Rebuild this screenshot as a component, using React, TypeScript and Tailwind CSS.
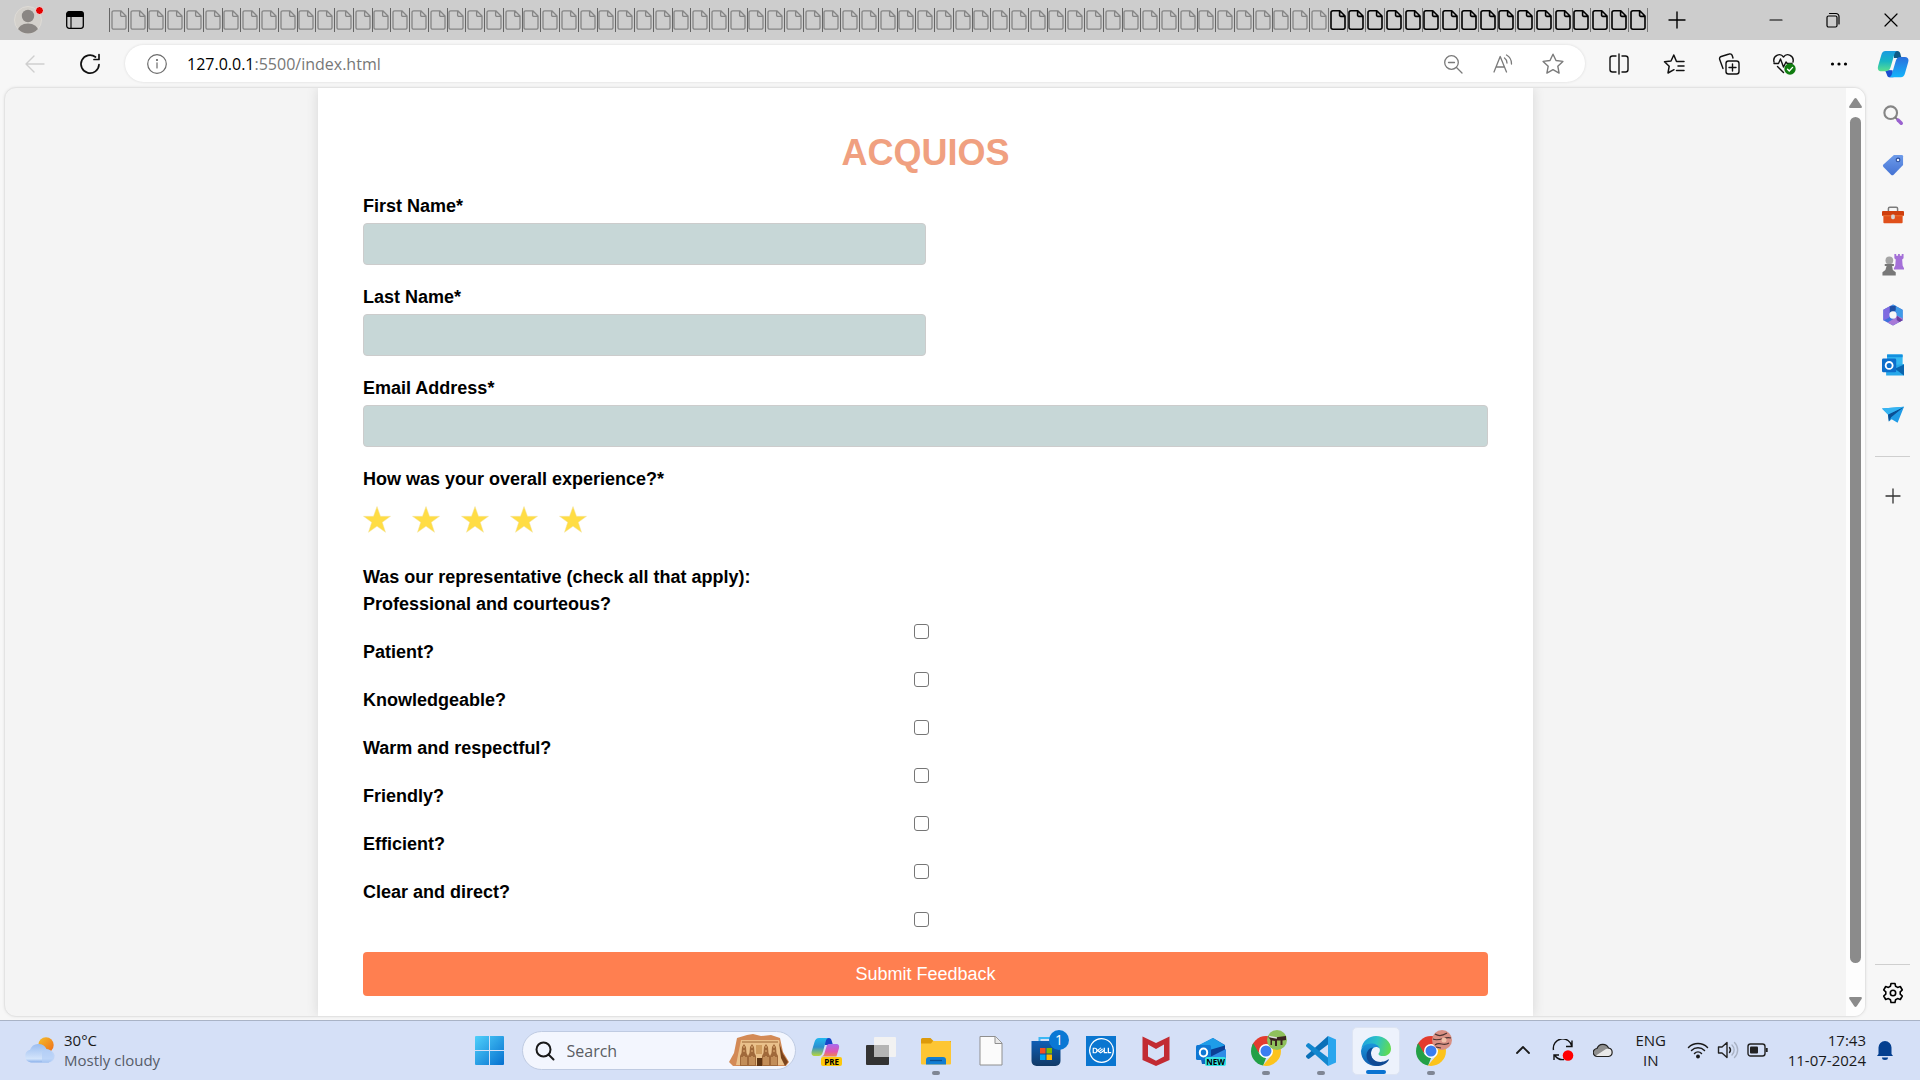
import React from "react";
import { SiDell } from "react-icons/si";

const UI = "font-['Open_Sans','Noto_Sans',sans-serif]";

/* ---------- small helpers ---------- */

function Stroke({ size = 24, box = 24, w = 1.5, children }: { size?: number; box?: number; w?: number; children: React.ReactNode }) {
  return (
    <svg width={size} height={size} viewBox={`0 0 ${box} ${box}`} fill="none" stroke="currentColor" strokeWidth={w} strokeLinecap="round" strokeLinejoin="round" aria-hidden="true">
      {children}
    </svg>
  );
}

function Art({ size = 30, box = 30, children }: { size?: number; box?: number; children: React.ReactNode }) {
  return (
    <svg width={size} height={size} viewBox={`0 0 ${box} ${box}`} aria-hidden="true">
      {children}
    </svg>
  );
}

const STAR = "M12 2.2l3 6.3 6.9.9-5.1 4.8 1.3 6.9-6.1-3.4-6.1 3.4 1.3-6.9L2.1 9.4l6.9-.9z";

/* ---------- browser tab strip ---------- */

const TABS = Array.from({ length: 82 }, (_, i) => i >= 65);

function TabStrip() {
  return (
    <header className="flex h-10 shrink-0 items-center bg-[#cdcdcd] text-black">
      <button aria-label="Profile" className="relative ml-[14px] size-7 shrink-0">
        <Art size={28} box={28}>
          <clipPath id="avatar"><circle cx="14" cy="14" r="13.5" /></clipPath>
          <circle cx="14" cy="14" r="13.5" fill="#d3d0cb" stroke="#dedbd6" />
          <g clipPath="url(#avatar)" fill="#8a8683">
            <circle cx="14" cy="10" r="6.2" />
            <ellipse cx="14" cy="25.5" rx="10.5" ry="8" />
          </g>
        </Art>
        <span className="absolute top-0 -right-0.5 size-[9px] rounded-full border border-[#e8e8e8] bg-[#e60000]" />
      </button>
      <button aria-label="Tab actions" className="ml-6 shrink-0">
        <svg width="18" height="18" viewBox="0 0 18 18" aria-hidden="true">
          <rect x=".7" y=".7" width="16.6" height="16.6" rx="2.5" fill="none" stroke="#000" strokeWidth="1.3" />
          <path d="M1 5.5V3a2.3 2.3 0 0 1 2.3-2.3h11.4A2.3 2.3 0 0 1 17 3v2.5zM5 5v12" stroke="#000" strokeWidth="1.1" />
        </svg>
      </button>
      <div className="ml-[25px] flex h-6 min-w-0 flex-1 border-r border-[#777]">
        {TABS.map((awake, i) => (
          <button key={i} aria-label={`Tab ${i + 1}`} className={awake ? "flex min-w-0 flex-1 items-center justify-center border-l border-[#777] text-black" : "flex min-w-0 flex-1 items-center justify-center border-l border-[#666] text-[#858585]"}>
            <svg width="16" height="20" viewBox="0 0 16 20" fill="none" stroke="currentColor" strokeWidth={awake ? 1.6 : 1.3} strokeLinejoin="round" aria-hidden="true" className="shrink-0">
              <path d="M2.8.8h7L15 6v11.4a1.8 1.8 0 0 1-1.8 1.8H2.8A1.8 1.8 0 0 1 1 17.4V2.6A1.8 1.8 0 0 1 2.8.8zM9.6.9v4.3A1.2 1.2 0 0 0 10.8 6.400H15" />
            </svg>
          </button>
        ))}
      </div>
      <div className="flex h-full w-[272px] shrink-0 items-center">
        <button aria-label="New tab" className="flex w-[58px] justify-center">
          <Stroke size={18} box={18} w={1.4}><path d="M9 1v16M1 9h16" /></Stroke>
        </button>
        <span className="w-[41px]" />
        <button aria-label="Minimize" className="flex w-[57px] justify-center">
          <Stroke size={14} box={14} w={1.2}><path d="M1 7h12" /></Stroke>
        </button>
        <button aria-label="Restore" className="flex w-[57px] justify-center">
          <Stroke size={16} box={16} w={1.2}><rect x="2" y="4" width="10" height="11" rx="1.5" /><path d="M4.5 1.5h6.5a3 3 0 0 1 3 3v7.5" /></Stroke>
        </button>
        <button aria-label="Close" className="flex w-[59px] justify-center">
          <Stroke size={14} box={14} w={1.2}><path d="M1 1l12 12M13 1L1 13" /></Stroke>
        </button>
      </div>
    </header>
  );
}

/* ---------- address bar row ---------- */

function CopilotMark() {
  return (
    <Art size={32} box={32}>
      <defs>
        <linearGradient id="cpA" x1="0" y1="0" x2="0" y2="1"><stop stopColor="#1a9be0" /><stop offset=".5" stopColor="#18b5c4" /><stop offset="1" stopColor="#5be08f" /></linearGradient>
        <linearGradient id="cpB" x1="0" y1="0" x2="0" y2="1"><stop stopColor="#2a6fdc" /><stop offset="1" stopColor="#14b4fb" /></linearGradient>
      </defs>
      <path d="M17 3h3.500c1.500 0 2.300 1 2.800 2.600L24.500 10h-7.500z" fill="#0e5a86" />
      <path d="M8 22l2.500 6.200c.5.800 1.200 1.100 2.200 1.100h3.800l-1-7z" fill="#1a4fd0" />
      <path d="M8.500 3h12.200c-2 .2-2.800 1.600-3.400 3.600l-3.500 12c-.8 2.800-2 4.700-5 4.700H4.500C1.200 23.300.2 21 1.200 17.700L4.300 7C5 4.300 6.300 3 8.500 3z" fill="url(#cpA)" />
      <path d="M23.800 29.300H11.600c2-.2 2.800-1.600 3.400-3.600l3.500-12c.8-2.800 2-4.700 5-4.700h4.300c3.300 0 4.300 2.300 3.300 5.600L28 25.300c-.7 2.700-2 4-4.200 4z" fill="url(#cpB)" />
    </Art>
  );
}

function Toolbar() {
  const slot = "flex w-[55px] shrink-0 justify-center";
  return (
    <nav className="flex h-[47px] shrink-0 items-center bg-[#f7f7f7] pr-px text-[#111]">
      <button aria-label="Back" className="ml-[7px] flex w-[55px] justify-center text-[#cfcfcf]">
        <Stroke size={20} box={20} w={1.4}><path d="M19 10H1M9 2L1 10l8 8" /></Stroke>
      </button>
      <button aria-label="Refresh" className={slot}>
        <Stroke size={22} box={22} w={1.7}><path d="M20 11.5a9 9 0 1 1-3.5-7.5M20 1.5V6.500H15" /></Stroke>
      </button>
      <div className="ml-2 mr-[6px] flex h-[37px] min-w-0 flex-1 items-center rounded-full bg-white pl-[22px] pr-[7px] shadow-[0_0_3px_rgba(0,0,0,0.12)]">
        <button aria-label="View site information" className="text-[#6b6b6b]">
          <Stroke size={20} box={20} w={1.2}><circle cx="10" cy="10" r="9.3" /><path d="M10 8.800v5.200" /><circle cx="10" cy="6" r=".5" fill="currentColor" /></Stroke>
        </button>
        <div className={`ml-5 flex-1 text-[16px] leading-6 text-[#777] ${UI}`}>
          <span className="text-black">127.0.0.1</span>:5500/index.html
        </div>
        <div className="flex text-[#7a7a7a]">
          <button aria-label="Zoom out" className="flex w-[50px] items-center justify-center">
            <Stroke size={20} box={20} w={1.3}><circle cx="8.5" cy="8.5" r="6.8" /><path d="M13.5 13.5L19 19M5.5 8.500h6" /></Stroke>
          </button>
          <button aria-label="Read aloud" className="flex w-[50px] items-center justify-center">
            <Stroke size={20} box={20} w={1.3}><path d="M1 18L7.200 2.500 13.500 18M3.200 13h8M11.500 4a6 6 0 0 1 2.500 5M13.500 1a10 10 0 0 1 5 9" /></Stroke>
          </button>
          <button aria-label="Add to favorites" className="flex w-[50px] items-center justify-center">
            <Stroke size={24} w={1.4}><path d={STAR} /></Stroke>
          </button>
        </div>
      </div>
      <button aria-label="Split screen" className={slot}>
        <Stroke size={22} box={22} w={1.4}><path d="M8 3H4.500A2.500 2.500 0 0 0 2 5.500v11A2.500 2.500 0 0 0 4.500 19H8M14 3h3.500A2.500 2.500 0 0 1 20 5.500v11a2.500 2.500 0 0 1-2.500 2.500H14M11 1v20" /></Stroke>
      </button>
      <button aria-label="Favorites" className={slot}>
        <Stroke size={22} box={22} w={1.5}><path d="M21 8.500h-7.500L10.800 2 8 8l-6.500.8 4.700 4.400L5 20l6-3.300M15 13h6M13.500 17.500H21" /></Stroke>
      </button>
      <button aria-label="Collections" className={slot}>
        <Stroke size={22} box={22} w={1.4}><rect x="8" y="8" width="13" height="13" rx="2.5" /><path d="M14.500 11v7M11 14.500h7M5 15.500l-3.300-9A2.300 2.300 0 0 1 3.200 3.500l8-2.500a2.300 2.300 0 0 1 3 1.500L15 5" /></Stroke>
      </button>
      <button aria-label="Browser essentials" className={slot}>
        <svg width="24" height="24" viewBox="0 0 24 24" fill="none" stroke="#111" strokeWidth="1.4" strokeLinejoin="round" strokeLinecap="round" aria-hidden="true">
          <path d="M2 10C.5 4 8 0 11.500 5 15 0 22.500 4 21 10M5.500 14.500l6 6M2 11.500h4.500l2-4.500 3 8 2.500-5 1.300 1.500H20" />
          <circle cx="18" cy="17" r="5.7" fill="#107c10" stroke="none" />
          <path d="M15.500 17.200l1.800 1.800 3.300-3.600" stroke="#fff" />
        </svg>
      </button>
      <button aria-label="Settings and more" className={slot}>
        <Art size={20} box={20}><circle cx="3.5" cy="10" r="1.6" /><circle cx="10" cy="10" r="1.6" /><circle cx="16.5" cy="10" r="1.6" /></Art>
      </button>
      <button aria-label="Copilot" className="flex w-[53px] shrink-0 justify-center">
        <CopilotMark />
      </button>
    </nav>
  );
}

/* ---------- feedback form ---------- */

const TRAITS = ["Professional and courteous?", "Patient?", "Knowledgeable?", "Warm and respectful?", "Friendly?", "Efficient?", "Clear and direct?"];

function Field({ id, label, wide }: { id: string; label: string; wide?: boolean }) {
  return (
    <div className="mb-[22px]">
      <label htmlFor={id} className="mb-[6px] block text-[18px] font-bold leading-[21px]">{label}</label>
      <input id={id} className={wide ? "block h-[42px] w-full rounded-[4px] border border-[#ccc] bg-[#c7d7d7] px-3" : "block h-[42px] w-1/2 rounded-[4px] border border-[#ccc] bg-[#c7d7d7] px-3"} />
    </div>
  );
}

function FeedbackForm() {
  return (
    <form className="mx-auto w-full max-w-[1215px] self-stretch bg-white px-[45px] pt-11 font-['Liberation_Sans',Arial,sans-serif] text-black shadow-[0_0_12px_rgba(0,0,0,0.12)]" onSubmit={(e) => e.preventDefault()}>
      <h1 className="mb-[22px] text-center text-[36px] font-bold leading-[42px] text-[#f0a080]">ACQUIOS</h1>
      <Field id="first" label="First Name*" />
      <Field id="last" label="Last Name*" />
      <Field id="email" label="Email Address*" wide />
      <h2 className="text-[18px] font-bold leading-[21px]">How was your overall experience?*</h2>
      <div className="mt-4 mb-[34px] flex gap-[21px]">
        {[1, 2, 3, 4, 5].map((n) => (
          <button key={n} type="button" aria-label={`${n} star`}>
            <svg width="28" height="27" viewBox="0 0 28 27" aria-hidden="true">
              <path d="M14 .5l3.500 9.800H27.500L19.300 16.300l3.200 10L14 20.200 5.500 26.300l3.200-10L.5 10.300H10.500z" fill="#ffdd44" stroke="#f3e3a0" strokeWidth=".5" />
            </svg>
          </button>
        ))}
      </div>
      <h2 className="mb-[6px] text-[18px] font-bold leading-[21px]">Was our representative (check all that apply):</h2>
      <div className="mb-[22px]">
        {TRAITS.map((t, i) => (
          <div key={t} className="h-12">
            <label htmlFor={`trait-${i}`} className="block text-[18px] font-bold leading-[21px]">{t}</label>
            <div className="flex justify-center pt-[9px] pr-2">
              <input id={`trait-${i}`} type="checkbox" className="size-[15px] appearance-none rounded-[3px] border border-[#767676] bg-white checked:bg-[#0075ff]" />
            </div>
          </div>
        ))}
      </div>
      <button type="submit" className="block h-11 w-full rounded-[4px] bg-[#ff7f50] text-[18px] leading-[21px] text-white">Submit Feedback</button>
    </form>
  );
}

function Viewport() {
  return (
    <main className="flex min-w-0 flex-1 overflow-hidden rounded-[12px] border border-[#e3e3e3] bg-[#f4f4f4] shadow-[0_0_3px_rgba(0,0,0,0.08)]">
      <div className="flex min-w-0 flex-1 overflow-hidden">
        <FeedbackForm />
      </div>
      <div className="flex w-[19px] shrink-0 flex-col items-center bg-[#fdfdfd] pt-[10px] pb-[9px]">
        <svg width="13" height="10" viewBox="0 0 13 10" aria-hidden="true"><path d="M5.300.8a1.500 1.500 0 0 1 2.400 0l5 7.500c.4.800 0 1.700-1 1.700H1.300c-1 0-1.400-.9-1-1.700z" fill="#8b8b8b" /></svg>
        <div className="mt-[9px] mb-[34px] w-[11px] flex-1 rounded-full bg-[#8b8b8b]" />
        <svg width="13" height="10" viewBox="0 0 13 10" aria-hidden="true"><path d="M5.300 9.200a1.500 1.500 0 0 0 2.400 0l5-7.500c.4-.8 0-1.700-1-1.700H1.300C.3 0-.1.900.3 1.700z" fill="#8b8b8b" /></svg>
      </div>
    </main>
  );
}

/* ---------- sidebar ---------- */

const SIDE: { name: string; art: React.ReactNode }[] = [
  { name: "Search", art: <><circle cx="9.5" cy="9.5" r="6.9" fill="none" stroke="#858585" strokeWidth="2.3" /><path d="M14.500 14.500l2.500 2.500" stroke="#777" strokeWidth="2" /><path d="M17.500 17.500l3.500 3.500" stroke="#9a62cf" strokeWidth="3.8" strokeLinecap="round" /></> },
  { name: "Shopping", art: <><path d="M13 1h8.500A1.500 1.500 0 0 1 23 2.500v9.500L12.700 22.600a2 2 0 0 1-2.800 0L1.600 14.300a2 2 0 0 1 0-2.800z" fill="url(#tagG)" /><circle cx="17.5" cy="6.5" r="2" fill="#e8f0ff" stroke="#2c4f9e" strokeWidth="1.2" /></> },
  { name: "Tools", art: <><path d="M7 8V5A1.500 1.500 0 0 1 8.500 3.500h7A1.500 1.500 0 0 1 17 5v3" fill="none" stroke="#7b7b7b" strokeWidth="1.6" /><rect x="1.500" y="11" width="21" height="10" rx="1" fill="#e0501b" /><rect x="0" y="7.500" width="24" height="5.500" rx="1" fill="#cf3f0e" /><path d="M1 12.800h22" stroke="#f07638" /><rect x="10" y="11.500" width="4" height="5" rx="1.500" fill="#d5d5d5" /></> },
  { name: "Games", art: <><path d="M13.500 0h2v2h2V0h2v2h2V0h2v4.500L22 6l.5 6.500 1.500 3v1.500H13V15.500l1.500-3L15 6l-1.500-1.500z" fill="#a470d8" /><circle cx="8" cy="7" r="4.200" fill="#a5a5a5" /><path d="M3 11h10v2h-2l.8 4.500 3.200 2.500v3.500H.5V20l3.200-2.500L5 13H3z" fill="#787878" /></> },
  { name: "Microsoft 365", art: <><path d="M12 .5l10.500 5.700v11.600L12 23.500 1.500 17.800V6.200z" fill="#3f6fdc" /><path d="M12 .5L22.500 6.500v10.500l-6.500-4V9.300L9 5z" fill="#3f9be8" /><path d="M6 20.200l6 3.300 10.500-5.700V15.500L16 12.500l-4 4z" fill="#a779d8" /><path d="M22.500 17.800L16 12.500v5l3 2.200z" fill="#6b3f9e" /><path d="M1.500 6.200L10 1.500 9 10l-1.500 5L1.500 18z" fill="#7f6ae0" /><path d="M8.500 2.500L15 2v5L8.500 10z" fill="#1f4fa5" /><circle cx="12" cy="12" r="4" fill="#f7f7f7" /></> },
  { name: "Outlook", art: <><rect x="5.500" y="0.500" width="17" height="20" rx="1" fill="#35b8f1" /><path d="M5.500.5h17v3h-17z" fill="#1490df" /><path d="M4.500 13l19.500-2v12.500H4.500z" fill="#28a8ea" /><path d="M24 11.500v12L14 16z" fill="#0a64ad" /><rect x="0" y="5" width="15.500" height="15" rx="1.500" fill="#0d6ecb" /><circle cx="7.800" cy="12.500" r="3.800" fill="none" stroke="#fff" strokeWidth="2" /></> },
  { name: "Drop", art: <><path d="M0 5l24-2-7 17.500-6.500-4L7.500 19 6.500 11.500z" fill="#1f9be6" /><path d="M6.500 11.500L24 3 10 14.500 7.500 19z" fill="#0b4f94" /><path d="M0 5l24-2L6.500 11.500z" fill="#35b4f2" /></> },
];

function Sidebar() {
  return (
    <aside className="flex w-[54px] shrink-0 flex-col items-center pt-[3px] pr-px">
      <svg width="0" height="0" className="absolute" aria-hidden="true"><defs><linearGradient id="tagG" x1="0" y1="0" x2="0" y2="1"><stop stopColor="#6d9bea" /><stop offset="1" stopColor="#4472d3" /></linearGradient></defs></svg>
      {SIDE.map((s) => (
        <button key={s.name} aria-label={s.name} className="flex h-[50px] w-full items-center justify-center">
          <svg width="22" height="22" viewBox="0 0 24 24" aria-hidden="true">{s.art}</svg>
        </button>
      ))}
      <hr className="mt-4 w-[35px] border-[#cfcfcf]" />
      <button aria-label="Customize" className="mt-[31px] text-[#333]"><Stroke size={16} box={16} w={1.3}><path d="M8 1v14M1 8h14" /></Stroke></button>
      <hr className="mt-auto w-[35px] border-[#cfcfcf]" />
      <button aria-label="Settings" className="mt-4 mb-3 text-black">
        <Stroke size={24} w={1.6}>
          <path d="M10 2.500h4l.6 2.800 2 1.100 2.700-.9 2 3.500-2.100 1.900v2.200l2.100 1.900-2 3.500-2.700-.9-2 1.100-.6 2.800h-4l-.6-2.800-2-1.100-2.700.9-2-3.500 2.100-1.900v-2.200L2.700 9l2-3.500 2.700.9 2-1.100z" />
          <circle cx="12" cy="12" r="2.7" />
        </Stroke>
      </button>
    </aside>
  );
}

/* ---------- taskbar ---------- */

function Chrome({ id, badge }: { id: string; badge: "green" | "pink" }) {
  return (
    <>
      <Art>
        <clipPath id={id}><circle cx="15" cy="15" r="15" /></clipPath>
        <g clipPath={`url(#${id})`}>
          <path d="M0 0h30v8.500H15L8.500 17.500 0 8z" fill="#e33b2e" />
          <path d="M0 3.500L8.800 18.500 15 22l-3 8H0z" fill="#23a047" />
          <path d="M15 8.200h15V30H11.500l9.700-11.500z" fill="#fcc31c" />
        </g>
        <circle cx="15" cy="15" r="7" fill="#fff" />
        <circle cx="15" cy="15" r="5.5" fill="#3b7df0" />
      </Art>
      <span className="absolute -top-1.5 -right-1.5">
        <svg width="20" height="20" viewBox="0 0 20 20" aria-hidden="true">
          {badge === "green" ? (
            <><circle cx="10" cy="10" r="10" fill="#8fc15c" /><path d="M1 6.500l6 1 12-1.500v4l-3.500.5V15h-2v-4.500h-3.500V16H8v-5l-3-.5V15H3.500v-5z" fill="#3a2421" /><path d="M2 6.500l8 1.500" stroke="#ddd" strokeWidth="1.500" /></>
          ) : (
            <><circle cx="10" cy="10" r="10" fill="#d99084" /><path d="M3 4c5 3 8 1 12-1M1 9c6 3 12-3 18-1M3 15c5-4 8 2 14-2M4 17l5 1" fill="none" stroke="#4b3432" strokeWidth="1.2" /><circle cx="12" cy="10" r="2.5" fill="#f0c0a8" /></>
          )}
        </svg>
      </span>
    </>
  );
}

const APPS: { name: string; run?: "idle" | "active"; art: React.ReactNode }[] = [
  { name: "Copilot preview", art: (
    <>
      <Art>
        <defs>
          <linearGradient id="preA" x1="0" y1="0" x2="0" y2="1"><stop stopColor="#22b8ee" /><stop offset=".5" stopColor="#2b8fd0" /><stop offset="1" stopColor="#b8d63c" /></linearGradient>
          <linearGradient id="preB" x1="0" y1="0" x2="0" y2="1"><stop stopColor="#a66bf0" /><stop offset=".6" stopColor="#e055b0" /><stop offset="1" stopColor="#f0894a" /></linearGradient>
        </defs>
        <path d="M14 2h4c1.500 0 2.200 1 2.600 2.500L22 9h-8z" fill="#1746c8" />
        <path d="M8 2h10c-2 0-2.800 1.500-3.300 3.500L12 15.500c-.8 3-2 4.500-4.500 4.500H4c-3 0-4-2-3.200-5L3.500 6C4.300 3.300 5.600 2 8 2z" fill="url(#preA)" />
        <path d="M18 8h7c3 0 3.600 2 2.900 4.500l-2.500 8H10c2 0 3-1.500 3.500-3.500l2-6.500C16 9 16.500 8 18 8z" fill="url(#preB)" />
      </Art>
      <span className={`absolute -right-px bottom-0 rounded-[2px] bg-[#fdc80a] px-[3px] text-[8px] font-bold leading-[9px] text-black ${UI}`}>PRE</span>
    </>
  ) },
  { name: "Task view", art: (
    <Art><rect x="0" y="9" width="23" height="20" rx="1" fill="#333" /><rect x="8" y="1" width="22" height="20" rx="1" fill="#f2f2f2" /><rect x="8" y="9" width="15" height="12" fill="#b4b4b4" /></Art>
  ) },
  { name: "File Explorer", run: "idle", art: (
    <Art><path d="M0 3.500A1.500 1.500 0 0 1 1.500 2h8l3 3H30v4H0z" fill="#dd9a0b" /><path d="M0 7.500h10l2-2.500h16.500A1.500 1.500 0 0 1 30 6.500v21a1 1 0 0 1-1 1H1a1 1 0 0 1-1-1z" fill="#fdc634" /><path d="M5 28.500V24a3 3 0 0 1 3-3h14a3 3 0 0 1 3 3v4.500z" fill="#127ed2" /><path d="M9 24.500h12" stroke="#0a4f91" strokeWidth="1.3" /></Art>
  ) },
  { name: "Document", art: (
    <Art><path d="M4 .5h15.500L26 7v22H4z" fill="#fbfbfb" stroke="#8f8f8f" /><path d="M19 .5V7.500h7" fill="#e9e9e9" stroke="#8f8f8f" /></Art>
  ) },
  { name: "Microsoft Store", art: (
    <>
      <Art><defs><linearGradient id="storeG" x1="0" y1="0" x2="0" y2="1"><stop stopColor="#0e5eb5" /><stop offset="1" stopColor="#123a66" /></linearGradient></defs><path d="M8.500 7V2h12v5" fill="none" stroke="#3cb7f3" strokeWidth="2" /><path d="M.5 5h29v20a5 5 0 0 1-5 5h-19a5 5 0 0 1-5-5z" fill="url(#storeG)" /><path d="M9 12h5.500v5.500H9z" fill="#f25022" /><path d="M15.500 12H21v5.500h-5.500z" fill="#7fba00" /><path d="M9 18.500h5.500V24H9z" fill="#00a4ef" /><path d="M15.500 18.500H21V24h-5.500z" fill="#ffb900" /></Art>
      <span className={`absolute -top-1.5 -right-2 flex size-5 items-center justify-center rounded-full bg-[#0a78d4] text-[14px] leading-5 text-white ${UI}`}>1</span>
    </>
  ) },
  { name: "Dell", art: <span className="flex size-[30px] items-center justify-center bg-[#0a76d0] text-white"><SiDell size={25} /></span> },
  { name: "McAfee", art: (
    <Art><path d="M1.500.5L15 7 28.500.5V24L15 30 1.500 24zM7 8.500v12l8 4.200 8-4.200v-12L15 13z" fill="#c22b32" fillRule="evenodd" /></Art>
  ) },
  { name: "Outlook new", art: (
    <>
      <Art><path d="M2 10L17 2l12 7v19H6z" fill="#1167c0" /><path d="M2 9.500L17 2l12 7.500L14 19z" fill="#1e9de8" /><path d="M10 15L29 9.500V16L12 27z" fill="#0c3f95" /><path d="M12 22l18-9v14H12z" fill="#2f8be6" /><rect x="0" y="9" width="15" height="15" rx="1.5" fill="#0f78d4" /><ellipse cx="7.5" cy="16.5" rx="3.7" ry="4" fill="none" stroke="#fff" strokeWidth="2" /></Art>
      <span className={`absolute right-0 bottom-0 rounded-[2px] bg-[#35e3e3] px-px text-[8px] font-bold leading-[9px] text-black ${UI}`}>NEW</span>
    </>
  ) },
  { name: "Chrome", run: "idle", art: <Chrome id="chromeA" badge="green" /> },
  { name: "Visual Studio Code", run: "idle", art: (
    <Art><path d="M22 0l8 3.500v23L22 30z" fill="#2aa6ee" /><path d="M22 0v8.500L3.500 22.500a1.500 1.500 0 0 1-2 0L.3 21.300a1.200 1.200 0 0 1 0-1.800z" fill="#0a70b8" /><path d="M22 30v-8.500L3.500 7.500a1.500 1.500 0 0 0-2 0L.3 8.700a1.200 1.200 0 0 0 0 1.800z" fill="#1287cf" /></Art>
  ) },
  { name: "Edge", run: "active", art: (
    <Art>
      <defs>
        <linearGradient id="edgeA" x1="0" y1=".3" x2="1" y2=".5"><stop stopColor="#1f9fe0" /><stop offset=".5" stopColor="#2cc3c5" /><stop offset="1" stopColor="#62dc50" /></linearGradient>
        <linearGradient id="edgeB" x1="0" y1="0" x2="0" y2="1"><stop stopColor="#1b95db" /><stop offset="1" stopColor="#0f5cae" /></linearGradient>
      </defs>
      <path d="M.3 13C1.500 5 7.800 0 15 0c8.500 0 15 5.800 15 12.700 0 4.300-3.200 7.300-7.500 7.300-3.500 0-5-1.200-5-2.100 0-.7 1.400-1.300 1.400-3.900 0-3-3.200-5.500-7.400-5.500C6.500 8.500 2 10.500.3 13z" fill="url(#edgeA)" />
      <path d="M0 15C.5 10.500 5 7.500 10 7.500c4.500 0 8 2 8.700 5-1-1-2.200-1.500-3.700-1.500-3 0-5 3-5 6.500C10 25 17 27.500 22 25.500c-2 2.800-4 4.500-7 4.500C6.500 30 0 23.500 0 15z" fill="url(#edgeB)" />
      <path d="M10 17.500c0 5.500 4.500 8.500 9.500 8.500 3 0 5.500-1 7.500-2.500.7-.4 1 .2.700.7C25.500 27.800 20.500 30 16 30c-6.500-.5-10.500-5.500-10.500-10.500 0-4.300 3-7.500 6.500-8-1.300 1.500-2 3.700-2 6z" fill="#104a94" />
    </Art>
  ) },
  { name: "Chrome profile 2", run: "idle", art: <Chrome id="chromeB" badge="pink" /> },
];

function Temple() {
  return (
    <svg width="60" height="34" viewBox="0 0 60 34" aria-hidden="true">
      <path d="M0 28l5-9 3-15 10-3 6-1 8 2 10-1 9 3 3 14 6 10-3 4H4z" fill="#d38a56" />
      <path d="M12 6h38l6 25H7z" fill="#eac18b" />
      <path d="M13 8h36" stroke="#9a6435" strokeWidth="1" />
      <path d="M27 11h6v9h-6z" fill="#cf9c5f" />
      {[15, 23, 37, 45].map((x) => (
        <g key={x}>
          <path d={`M${x} 10l2 3 .5 6 1.500 3v10h-8V22l1.500-3 .5-6z`} fill="#a0693a" />
          <path d={`M${x - 1} 13h2M${x - 1} 17h2M${x - 2} 23v8M${x} 22v9M${x + 2} 23v8`} stroke="#e5b478" strokeWidth="1" />
        </g>
      ))}
      <path d="M28 24h5v8h-5z" fill="#5d3413" />
      <path d="M50 8l4 12 5 8-3 4-4-8z" fill="#7a431c" />
    </svg>
  );
}

function Taskbar() {
  return (
    <footer className={`grid h-[60px] shrink-0 grid-cols-[1fr_auto_1fr] items-center border-t border-[#a9b3c6] bg-[#d5e0f7] text-[15px] leading-5 text-[#1a1a1a] ${UI}`}>
      <button className="ml-6 flex items-center gap-[9px] justify-self-start pb-0.5 text-left">
        <svg width="31" height="26" viewBox="0 0 31 26" aria-hidden="true">
          <defs>
            <linearGradient id="sun" x1="0" y1="0" x2="1" y2="1"><stop stopColor="#f4c02c" /><stop offset="1" stopColor="#ef6a1a" /></linearGradient>
            <linearGradient id="cloud" x1="0" y1="0" x2="0" y2="1"><stop stopColor="#9bbdf0" /><stop offset=".8" stopColor="#d3e4fb" /><stop offset="1" stopColor="#86aeea" /></linearGradient>
          </defs>
          <circle cx="22" cy="8" r="7.7" fill="url(#sun)" />
          <path d="M7 25.500A6.500 6.500 0 0 1 6 12.800 9 9 0 0 1 22.500 12 7 7 0 0 1 24.500 25.500z" fill="url(#cloud)" />
          <path d="M18 15.500a7 7 0 0 1 12.500 3c0 4-2.500 7-6.500 7h-6z" fill="#b4cff6" opacity=".7" />
        </svg>
        <span>
          <span className="block">30°C</span>
          <span className="block text-[#565c68]">Mostly cloudy</span>
        </span>
      </button>

      <div className="flex items-center">
        <button aria-label="Start" className="flex w-[55px] justify-center">
          <Art size={29} box={29}>
            <defs><linearGradient id="win" gradientUnits="userSpaceOnUse" x1="0" y1="0" x2="29" y2="29"><stop stopColor="#4fd0fb" /><stop offset="1" stopColor="#0670cf" /></linearGradient></defs>
            <path d="M1 0h13v14H0V1a1 1 0 0 1 1-1zM15 0h13a1 1 0 0 1 1 1v13H15zM0 15h14v14H1a1 1 0 0 1-1-1zM15 15h14v13a1 1 0 0 1-1 1H15z" fill="url(#win)" />
          </Art>
        </button>
        <label className="mr-[3px] ml-[5px] flex h-[39px] w-[274px] items-center overflow-hidden rounded-full border border-[#bfcbe2] bg-[#f3f6fe] pl-3 pr-[6px]">
          <Stroke size={20} box={20} w={2}><circle cx="8.5" cy="8.5" r="7" /><path d="M13.500 13.500L18.500 18.500" /></Stroke>
          <input aria-label="Search" placeholder="Search" className="ml-3 w-0 flex-1 bg-transparent text-[16px] outline-none placeholder:text-[#5a5d63]" />
          <Temple />
        </label>
        {APPS.map((a) => (
          <button key={a.name} aria-label={a.name} className="flex w-[55px] justify-center">
            <span className={a.run === "active" ? "relative flex size-12 items-center justify-center rounded-[5px] border border-[#dde4f3] bg-[#edf2fc]" : "relative flex size-12 items-center justify-center"}>
              <span className="relative">{a.art}</span>
              {a.run === "idle" && <span className="absolute bottom-0 h-1 w-2 rounded-full bg-[#7f8694]" />}
              {a.run === "active" && <span className="absolute bottom-0 h-1 w-5 rounded-full bg-[#0a73d1]" />}
            </span>
          </button>
        ))}
      </div>

      <div className="mr-[27px] flex items-center justify-self-end pb-0.5">
        <button aria-label="Show hidden icons" className="flex w-10 justify-center"><Stroke size={16} box={16} w={1.8}><path d="M2 11l6-6 6 6" /></Stroke></button>
        <button aria-label="Updates" className="flex w-10 justify-center">
          <svg width="22" height="22" viewBox="0 0 22 22" fill="none" stroke="#111" strokeWidth="1.4" aria-hidden="true"><path d="M1.500 11A9.300 9.300 0 0 1 20 7.500M20 1.500V7.500H14M2 21v-5h5M3 16.500a9 9 0 0 0 9 4" /><circle cx="16" cy="16.5" r="5.3" fill="#f00" stroke="none" /></svg>
        </button>
        <button aria-label="OneDrive" className="flex w-10 justify-center">
          <svg width="20" height="16" viewBox="0 0 20 16" aria-hidden="true"><path d="M4.500 14.500A4 4 0 0 1 4 6.500 6.200 6.200 0 0 1 15.500 6a4.300 4.300 0 0 1 0 8.500z" fill="#8f8f8f" /><path d="M3 13.500l10-6.500 3-.5a3.800 3.800 0 0 1-.5 8H4.500z" fill="#e9e9e9" /><path d="M4.500 14.500A4 4 0 0 1 4 6.500 6.200 6.200 0 0 1 15.500 6a4.300 4.300 0 0 1 0 8.500z" fill="none" stroke="#222" strokeWidth="1.2" /></svg>
        </button>
        <button className="w-14 text-center">ENG<br />IN</button>
        <button aria-label="Network, volume and battery" className="ml-2 flex items-center gap-2">
          <Stroke size={22} box={22} w={1.5}><path d="M1.500 8.500a13.500 13.500 0 0 1 19 0M4.500 11.500a9.200 9.200 0 0 1 13 0M7.500 14.500a5 5 0 0 1 7 0" /><circle cx="11" cy="17.5" r="1.2" fill="currentColor" /></Stroke>
          <svg width="22" height="20" viewBox="0 0 22 20" fill="none" stroke="#222" strokeWidth="1.4" strokeLinejoin="round" strokeLinecap="round" aria-hidden="true"><path d="M1.500 7h3.500l5-4.500v15L5 13H1.500zM12.500 7.500a4 4 0 0 1 0 5" /><path d="M15 5a7 7 0 0 1 0 10M17.500 2.500a10.500 10.500 0 0 1 0 15" stroke="#a9b2c4" /></svg>
          <svg width="21" height="16" viewBox="0 0 21 16" fill="none" stroke="#222" strokeWidth="1.4" aria-hidden="true"><rect x="1" y="2" width="17" height="12" rx="2.5" /><rect x="3" y="4.5" width="8" height="7" rx="1" fill="#222" stroke="none" /><path d="M19.700 6v4" strokeWidth="2" /></svg>
        </button>
        <button className="ml-5 text-right">17:43<br />11-07-2024</button>
        <button aria-label="Notifications" className="ml-[11px]">
          <svg width="16" height="20" viewBox="0 0 16 20" aria-hidden="true"><path d="M1.500 14V7.500a6.500 6.500 0 0 1 13 0V14l1.500 2H0zM5 17.500h6a3 2.500 0 0 1-6 0z" fill="#043f8f" /></svg>
        </button>
      </div>
    </footer>
  );
}

export default function App() {
  return (
    <div className="flex h-screen flex-col overflow-hidden bg-[#f7f7f7]">
      <TabStrip />
      <Toolbar />
      <div className="mb-[3px] ml-1 flex min-h-0 flex-1">
        <Viewport />
        <Sidebar />
      </div>
      <Taskbar />
    </div>
  );
}
